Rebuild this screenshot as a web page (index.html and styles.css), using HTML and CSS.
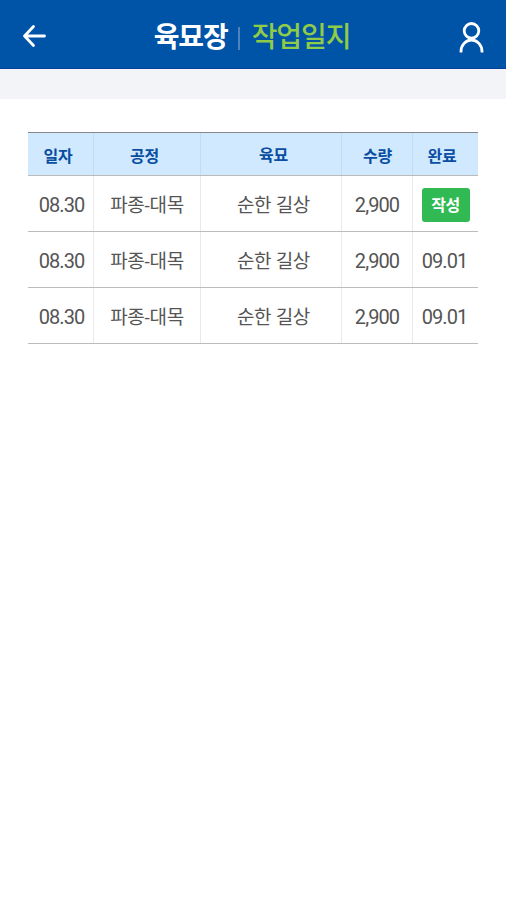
FILE: index.html
```html
<!DOCTYPE html>
<html lang="ko">
<head>
<meta charset="utf-8">
<title>작업일지</title>
<link rel="stylesheet" href="styles.css">
</head>
<body>
<header class="bar">
  <svg class="back" viewBox="0 0 24 24"><path d="M22.500 12H2.500M11.500 2.500L2.500 12l9 9.500"/></svg>
  <h1 class="title"><span class="place">육묘장</span><span class="divider"></span><span class="page">작업일지</span></h1>
  <svg class="user" viewBox="0 0 26 32"><circle cx="12.500" cy="9.800" r="7.300"/><path d="M2 31.500v-1a10.500 11.500 0 0 1 21 0v1"/></svg>
</header>
<div class="strip"></div>
<main>
  <div class="table">
    <div class="row head"><span>일자</span><span>공정</span><span>육묘</span><span>수량</span><span>완료</span></div>
    <div class="row"><span class="num">08.30</span><span>파종-대목</span><span>순한 길상</span><span class="num">2,900</span><span><button class="write">작성</button></span></div>
    <div class="row"><span class="num">08.30</span><span>파종-대목</span><span>순한 길상</span><span class="num">2,900</span><span class="num">09.01</span></div>
    <div class="row"><span class="num">08.30</span><span>파종-대목</span><span>순한 길상</span><span class="num">2,900</span><span class="num">09.01</span></div>
  </div>
</main>
</body>
</html>
```
FILE: styles.css
```css
* { box-sizing: border-box; }
body { margin: 0; background: #fff; font-family: Roboto, "Noto Sans CJK KR", sans-serif; color: #555; }
.bar { height: 69px; background: #0054a8; border-bottom: 1px solid #00459a; display: flex; align-items: center; justify-content: space-between; padding: 4px 21px 0 22px; }
.back { width: 24px; height: 24px; fill: none; stroke: #fff; stroke-width: 2.8; stroke-linecap: round; stroke-linejoin: round; }
.user { width: 26px; height: 32px; margin-top: 2px; fill: none; stroke: #fff; stroke-width: 2.8; }
.title { margin: 0 0 0 -1px; padding-top: 4px; display: flex; align-items: center; font-size: 28px; font-weight: 500; line-height: 40px; letter-spacing: -1.100px; color: #fff; }
.place { font-weight: 700; }
.divider { width: 2px; height: 23px; margin: 0 12px 0 10px; background: #4f82bd; }
.page { color: #8fca48; }
.strip { height: 30px; background: #f2f4f8; }
main { padding: 33px 28px; }
.table { border-top: 1px solid #85878a; }
.row { display: grid; grid-template-columns: 66px 107px 141px 71px 65px; height: 56px; border-bottom: 1px solid #bbb; font-size: 19px; letter-spacing: -0.300px; }
.row span { display: flex; align-items: center; justify-content: center; border-right: 1px solid #e9e9e9; }
.row span:nth-child(2) { padding-right: 0; }
.row span:nth-child(3) { padding-left: 5px; }
.row span:last-child { border-right: 0; padding-right: 2px; }
.row span:first-child { padding-left: 2px; }
.row .num { padding-top: 2px; font-size: 20px; letter-spacing: -0.900px; }
.row.head { height: 43px; background: #d0e9ff; color: #0a4ea2; font-size: 16px; font-weight: 700; }
.row.head span { border-color: #c2dcf1; padding-top: 2px; }
.row.head span:nth-child(1), .row.head span:nth-child(2) { padding: 1px 5px 0 0; }
.row.head span:nth-child(3) { padding: 0 0 1px 5px; }
.row.head span:last-child { padding-right: 7px; }
.row.head span:nth-child(4) { padding-left: 1px; }
.write { width: 48px; height: 34px; margin: 2px 0 0 2px; padding: 0 0 2px; border: 0; border-radius: 3px; background: #31b954; color: #fff; font: 700 16px "Noto Sans CJK KR", sans-serif; letter-spacing: -0.500px; }
```
